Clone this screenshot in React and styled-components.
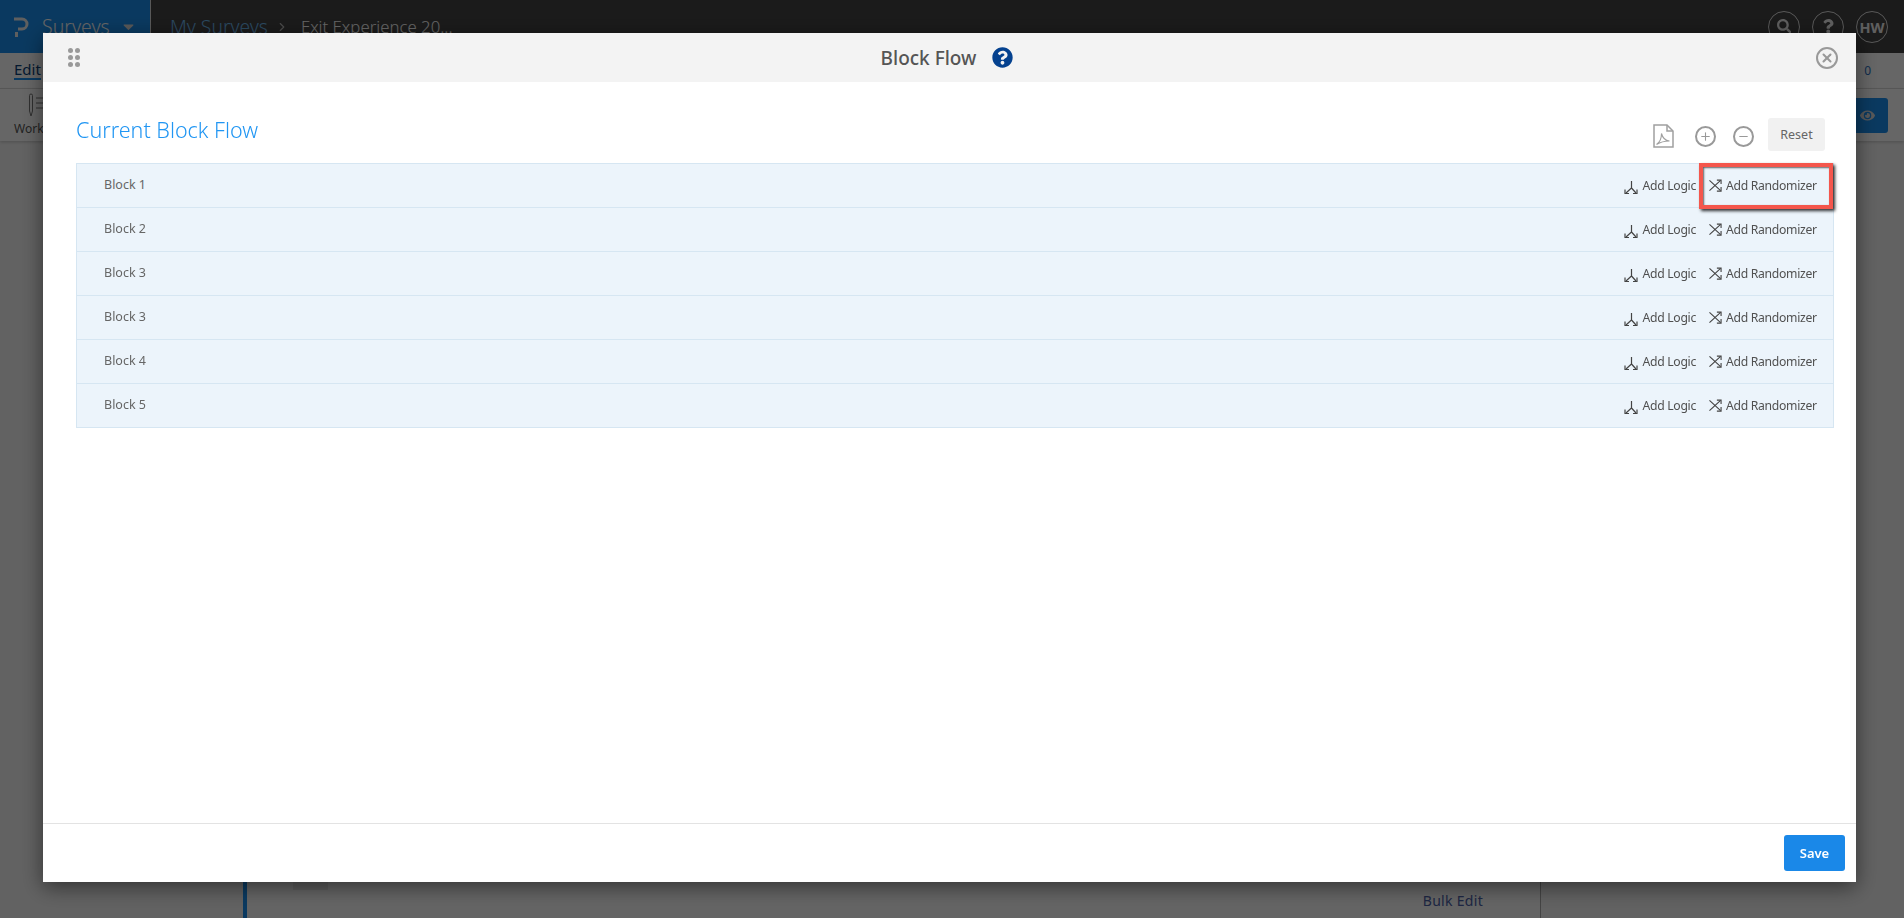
import styled, { createGlobalStyle } from "styled-components";
import { FaSearch, FaQuestion, FaQuestionCircle, FaEye, FaCaretDown } from "react-icons/fa";
import { Plus, Minus, X, ChevronRight } from "lucide-react";

const GlobalStyle = createGlobalStyle`
  html, body {
    margin: 0;
    height: 100%;
    overflow: hidden;
    font-family: "Noto Sans", "Open Sans", sans-serif;
  }
`;

const Page = styled.div`
  width: 1904px;
  height: 918px;
  display: flex;
  flex-direction: column;
  background: #f4f4f4;
`;

const TopBar = styled.header`
  height: 53px;
  display: flex;
  align-items: center;
  background: #444;
  color: #fff;
  flex-shrink: 0;
`;

const Brand = styled.div`
  width: 151px;
  height: 100%;
  display: flex;
  align-items: center;
  gap: 13px;
  padding-left: 14px;
  box-sizing: border-box;
  background: #1a90f0;
  border-right: 1px solid #ddd;
  font-size: 19.5px;
  font-weight: 300;
  svg:last-child {
    margin-left: -3px;
    font-size: 17px;
    color: #ddd;
  }
`;

const Crumbs = styled.nav`
  display: flex;
  align-items: center;
  gap: 7px;
  padding-left: 19px;
  font-size: 16.8px;
  font-weight: 300;
  flex: 1;
  svg {
    margin-right: 5px;
    color: #bbb;
  }
`;

const CrumbLink = styled.span`
  color: #6cb8f0;
  font-size: 19.3px;
`;

const RoundButton = styled.span`
  width: 30px;
  height: 30px;
  border: 1px solid #ddd;
  border-radius: 50%;
  display: flex;
  align-items: center;
  justify-content: center;
  font-size: 14.5px;
  font-weight: 700;
  color: #eee;
`;

const TopActions = styled.div`
  display: flex;
  gap: 12px;
  padding-right: 16px;
`;

const SubBar = styled.div`
  height: 35px;
  display: flex;
  align-items: center;
  justify-content: space-between;
  padding: 0 33px 0 14px;
  background: #fff;
  border-bottom: 1px solid #ddd;
  font-size: 15px;
  flex-shrink: 0;
`;

const EditTab = styled.span`
  color: #0a3f78;
  border-bottom: 2px solid #1a90f0;
  line-height: 17px;
`;

const Count = styled.span`
  color: #2a70c0;
  font-size: 12px;
`;

const ToolBar = styled.div`
  height: 52px;
  display: flex;
  align-items: center;
  justify-content: space-between;
  padding: 0 16px 0 14px;
  background: #fff;
  box-shadow: 0 1px 3px rgba(0, 0, 0, 0.2);
  font-size: 12px;
  color: #555;
  flex-shrink: 0;
`;

const ToolItem = styled.div`
  display: flex;
  flex-direction: column;
  align-items: center;
  gap: 3px;
`;

const PreviewButton = styled.span`
  width: 60px;
  height: 35px;
  display: flex;
  align-items: center;
  justify-content: flex-end;
  padding-right: 13px;
  box-sizing: border-box;
  border-radius: 3px;
  background: #1a90f0;
  color: #ddd;
  font-size: 15px;
`;

const Content = styled.main`
  flex: 1;
  display: flex;
  padding-left: 243px;
`;

const Panel = styled.section`
  width: 1298px;
  display: flex;
  flex-direction: column;
  justify-content: flex-end;
  box-sizing: border-box;
  background: #fbfbfb;
  border-left: 4px solid #1a90f0;
  border-right: 1px solid #aaa;
`;

const QuestionBox = styled.div`
  width: 35px;
  height: 20px;
  margin-left: 46px;
  background: #e8e8e8;
`;

const BulkRow = styled.div`
  height: 28px;
  box-sizing: border-box;
  display: flex;
  align-items: center;
  justify-content: flex-end;
  padding: 0 57px 7px 0;
  font-size: 14px;
  color: #4a60a8;
  letter-spacing: 0.3px;
`;

const Overlay = styled.div`
  position: fixed;
  inset: 0;
  display: flex;
  padding: 33px 48px 36px 43px;
  background: rgba(0, 0, 0, 0.6);
`;

const Dialog = styled.div`
  flex: 1;
  display: flex;
  flex-direction: column;
  background: #fff;
  box-shadow: 0 5px 20px rgba(0, 0, 0, 0.5);
`;

const DialogHeader = styled.div`
  height: 49px;
  display: flex;
  align-items: center;
  justify-content: space-between;
  padding: 0 18px 0 25px;
  background: #f3f3f3;
  flex-shrink: 0;
`;

const DialogTitle = styled.div`
  display: flex;
  align-items: center;
  gap: 16px;
  margin-right: 2px;
  font-size: 19px;
  font-weight: 500;
  color: #555;
  svg {
    color: #04418f;
    font-size: 21px;
  }
`;

const Grip = styled.span`
  display: grid;
  grid-template-columns: 5px 5px;
  gap: 2px;
  i {
    width: 5px;
    height: 5px;
    border-radius: 50%;
    background: #999;
  }
`;

const CloseButton = styled.span`
  width: 18px;
  height: 18px;
  border: 2px solid #999;
  border-radius: 50%;
  display: flex;
  align-items: center;
  justify-content: center;
  color: #999;
`;

const DialogBody = styled.div`
  flex: 1;
  padding: 30px 22px 0 33px;
`;

const FlowHeader = styled.div`
  display: flex;
  align-items: center;
  justify-content: space-between;
  box-sizing: border-box;
  height: 51px;
  padding: 0 9px 3px 0;
`;

const FlowTitle = styled.h2`
  margin: 0 0 14px;
  font-size: 21.5px;
  font-weight: 300;
  color: #2196f3;
`;

const FlowTools = styled.div`
  display: flex;
  align-items: center;
  color: #999;
`;

const RoundTool = styled.span`
  width: 17px;
  height: 17px;
  margin-left: ${({ $gap }) => $gap}px;
  border: 2px solid #999;
  border-radius: 50%;
  display: flex;
  align-items: center;
  justify-content: center;
`;

const ResetButton = styled.span`
  width: 57px;
  height: 33px;
  margin: 0 0 3px 14px;
  display: flex;
  align-items: center;
  justify-content: center;
  border-radius: 3px;
  background: #f1f1f1;
  color: #666;
  font-size: 12.5px;
`;

const BlockList = styled.div`
  display: flex;
  flex-direction: column;
  border-top: 1px solid #d6e6f2;
`;

const BlockRow = styled.div`
  height: 43px;
  display: flex;
  align-items: center;
  justify-content: space-between;
  padding: 0 0 0 27px;
  background: #ecf4fb;
  border: 1px solid #d6e6f2;
  border-top: none;
`;

const BlockName = styled.span`
  margin-top: -3px;
  font-size: 12.5px;
  color: #666;
`;

const BlockActions = styled.div`
  display: flex;
  align-items: center;
`;

const LogicAction = styled.span`
  display: flex;
  align-items: center;
  gap: 5px;
  padding-right: 3px;
  font-size: 12.2px;
  letter-spacing: -0.3px;
  color: #505050;
  svg {
    margin-top: 4px;
  }
`;

const RandomizerAction = styled.span`
  width: 134px;
  height: 46px;
  display: flex;
  align-items: center;
  gap: 4px;
  padding-left: 6px;
  box-sizing: border-box;
  font-size: 12.2px;
  letter-spacing: -0.3px;
  color: #505050;
  border: 4px solid transparent;
  ${({ $marked }) =>
    $marked &&
    `
    position: relative;
    z-index: 1;
    border-color: #f4564c;
    box-shadow: 2px 2px 3px rgba(0, 0, 0, 0.8), inset 1px 1px 2px rgba(0, 0, 0, 0.6);
  `}
`;

const DialogFooter = styled.div`
  height: 58px;
  display: flex;
  align-items: center;
  justify-content: flex-end;
  padding-right: 11px;
  border-top: 1px solid #e3e3e3;
  flex-shrink: 0;
`;

const SaveButton = styled.button`
  width: 61px;
  height: 36px;
  border: none;
  border-radius: 3px;
  background: #1a88e8;
  color: #fff;
  font-family: inherit;
  font-size: 13px;
  font-weight: 600;
`;

const blocks = ["Block 1", "Block 2", "Block 3", "Block 3", "Block 4", "Block 5"];

function BrandMark() {
  return (
    <svg width="15" height="20" viewBox="0 0 15 20" fill="none" stroke="#eee" strokeWidth="3">
      <path d="M0 2h8a5 5 0 0 1 0 10H4" />
      <path d="M2.500 15v5" />
    </svg>
  );
}

function WorkspaceIcon() {
  return (
    <svg width="34" height="24" viewBox="0 0 34 24" fill="none" stroke="#777" strokeWidth="1">
      <path d="M1.500 2.500a1.500 1.500 0 0 1 3 0V18L3 23l-1.500-5z" />
      <path d="M8 5h12M8 10h12M8 15h12" />
    </svg>
  );
}

function LogicIcon() {
  return (
    <svg width="14" height="13" viewBox="0 0 14 13" fill="none" stroke="#444" strokeWidth="1.2">
      <path d="M7.500 0v7L2 12M7.500 7L12 12" />
      <path d="M1 8.500V12.500H5M13 8.500V12.500H9" />
    </svg>
  );
}

function ShuffleIcon() {
  return (
    <svg width="13" height="13" viewBox="0 0 14 13" fill="none" stroke="#444" strokeWidth="1.2">
      <path d="M0.500 1L12.500 12M0.500 12L12.500 1" />
      <path d="M8.500 0.700H13V5M13 8V12.500H8.500" />
    </svg>
  );
}

function PdfIcon() {
  return (
    <svg width="21" height="24" viewBox="0 0 21 24" fill="none" stroke="#a0a0a0" strokeWidth="1.5">
      <path d="M1 1h13l6 6v16H1z" />
      <path d="M14 1v6h6" />
      <path d="M3.500 20.500c3-2 5-6 5-11 1 4 3 7 8 7.500-4 0-9 1-13 3.500z" strokeWidth="1.1" />
    </svg>
  );
}

export default function App() {
  return (
    <>
      <GlobalStyle />
      <Page>
        <TopBar>
          <Brand>
            <BrandMark />
            Surveys
            <FaCaretDown />
          </Brand>
          <Crumbs>
            <CrumbLink>My Surveys</CrumbLink>
            <ChevronRight size={14} />
            Exit Experience 20...
          </Crumbs>
          <TopActions>
            <RoundButton>
              <FaSearch />
            </RoundButton>
            <RoundButton>
              <FaQuestion />
            </RoundButton>
            <RoundButton>HW</RoundButton>
          </TopActions>
        </TopBar>
        <SubBar>
          <EditTab>Edit</EditTab>
          <Count>0</Count>
        </SubBar>
        <ToolBar>
          <ToolItem>
            <WorkspaceIcon />
            Workspace
          </ToolItem>
          <PreviewButton>
            <FaEye />
          </PreviewButton>
        </ToolBar>
        <Content>
          <Panel>
            <QuestionBox />
            <BulkRow>Bulk Edit</BulkRow>
          </Panel>
        </Content>
      </Page>
      <Overlay>
        <Dialog>
          <DialogHeader>
            <Grip>
              <i />
              <i />
              <i />
              <i />
              <i />
              <i />
            </Grip>
            <DialogTitle>
              Block Flow
              <FaQuestionCircle />
            </DialogTitle>
            <CloseButton>
              <X size={14} strokeWidth={3.5} />
            </CloseButton>
          </DialogHeader>
          <DialogBody>
            <FlowHeader>
              <FlowTitle>Current Block Flow</FlowTitle>
              <FlowTools>
                <PdfIcon />
                <RoundTool $gap={21}>
                  <Plus size={13} strokeWidth={2} />
                </RoundTool>
                <RoundTool $gap={17}>
                  <Minus size={13} strokeWidth={2} />
                </RoundTool>
                <ResetButton>Reset</ResetButton>
              </FlowTools>
            </FlowHeader>
            <BlockList>
              {blocks.map((name, index) => (
                <BlockRow key={index}>
                  <BlockName>{name}</BlockName>
                  <BlockActions>
                    <LogicAction>
                      <LogicIcon />
                      Add Logic
                    </LogicAction>
                    <RandomizerAction $marked={index === 0}>
                      <ShuffleIcon />
                      Add Randomizer
                    </RandomizerAction>
                  </BlockActions>
                </BlockRow>
              ))}
            </BlockList>
          </DialogBody>
          <DialogFooter>
            <SaveButton>Save</SaveButton>
          </DialogFooter>
        </Dialog>
      </Overlay>
    </>
  );
}
